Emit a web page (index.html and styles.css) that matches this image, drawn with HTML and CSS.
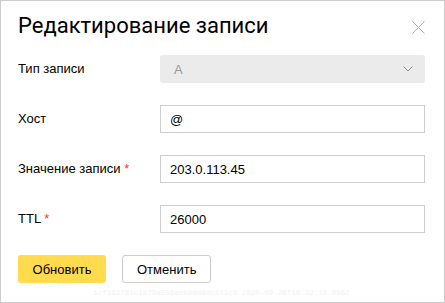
FILE: index.html
```html
<!DOCTYPE html>
<html lang="ru">
<head>
<meta charset="utf-8">
<link rel="stylesheet" href="styles.css">
</head>
<body>
<div class="dialog">
  <div class="header">
    <h1 class="title">Редактирование записи</h1>
    <button class="close" aria-label="Закрыть">
      <svg width="13" height="13" viewBox="0 0 13 13"><path d="M0.5 0.5L12.5 12.5M12.5 0.5L0.5 12.5" stroke="#b3b3b3" stroke-width="1" fill="none"/></svg>
    </button>
  </div>
  <div class="form">
    <div class="label">Тип записи</div>
    <div class="select">
      <span class="select-value">A</span>
      <svg class="chevron" width="10" height="6" viewBox="0 0 10 6"><path d="M0.5 0.5L5 5L9.5 0.5" stroke="#8c8c8c" stroke-width="1" fill="none"/></svg>
    </div>
    <div class="label">Хост</div>
    <div class="input">@</div>
    <div class="label">Значение записи <span class="req">*</span></div>
    <div class="input">203.0.113.45</div>
    <div class="label">TTL <span class="req">*</span></div>
    <div class="input">26000</div>
  </div>
  <div class="actions">
    <button class="btn btn-primary">Обновить</button>
    <button class="btn btn-default">Отменить</button>
  </div>
  <div class="build">1cf162781c1578a556aeb80d8dc111c3 2020-09-26T16:32:18.096Z</div>
</div>
</body>
</html>
```
FILE: styles.css
```css
html, body {
  margin: 0;
  padding: 0;
  background: #fff;
}
.dialog {
  box-sizing: border-box;
  width: 445px;
  height: 303px;
  border: 1px solid #cccccc;
  padding: 0 19px 0 17px;
  font-family: "Liberation Sans", Arial, sans-serif;
  font-size: 13px;
  color: #000;
  display: flex;
  flex-direction: column;
}
.header {
  height: 54px;
  display: flex;
  align-items: flex-start;
  justify-content: space-between;
}
.title {
  margin: 11px 0 0 0;
  font-family: Roboto, "Liberation Sans", sans-serif;
  font-weight: 400;
  font-size: 22px;
  line-height: 28px;
  color: #000;
}
.close {
  margin: 20px 0 0 0;
  padding: 0;
  border: 0;
  background: none;
  width: 13px;
  height: 13px;
  display: block;
}
.close svg { display: block; }
.form {
  display: grid;
  grid-template-columns: 142px 1fr;
  grid-auto-rows: 28px;
  row-gap: 22px;
  align-items: center;
}
.label {
  line-height: 16px;
}
.req { color: #ff3333; }
.select {
  box-sizing: border-box;
  height: 28px;
  background: #ebebeb;
  border-radius: 3px;
  display: flex;
  align-items: center;
  justify-content: space-between;
  padding: 0 12px 0 14px;
}
.select-value { color: #999; }
.chevron { display: block; }
.input {
  box-sizing: border-box;
  height: 28px;
  border: 1px solid #cfcfcf;
  padding: 0 9px;
  display: flex;
  align-items: center;
}
.actions {
  display: flex;
  gap: 16px;
  margin-top: 22px;
}
.btn {
  box-sizing: border-box;
  height: 28px;
  font-family: "Liberation Sans", Arial, sans-serif;
  font-size: 13px;
  color: #000;
  border-radius: 3px;
  padding: 0 14px;
  margin: 0;
}
.btn-primary {
  width: 88px;
  background: #ffdb4d;
  border: 0;
}
.btn-default {
  width: 89px;
  background: #fff;
  border: 1px solid #cccccc;
}
.build {
  margin-top: 6px;
  text-align: center;
  font-family: "Liberation Mono", monospace;
  font-size: 7.5px;
  color: #f0f0f0;
}
```
